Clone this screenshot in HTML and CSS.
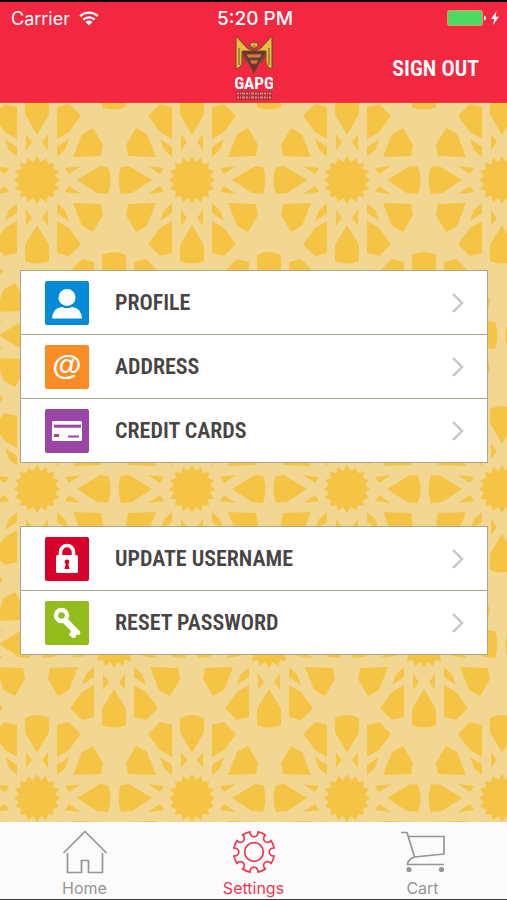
FILE: index.html
```html
<!DOCTYPE html>
<html lang="en">
<head>
<meta charset="utf-8">
<meta name="viewport" content="width=device-width, initial-scale=1">
<title>Settings</title>
<link rel="stylesheet" href="styles.css">
</head>
<body>
<div class="screen">
  <header class="header">
    <div class="status">
      <div class="status-left">
        <span>Carrier</span>
        <svg class="wifi" viewBox="0 0 20 15" aria-hidden="true">
          <g fill="none" stroke="#fff" stroke-width="2.4">
            <path d="M1.2 5.2a12.6 12.6 0 0 1 17.6 0"/>
            <path d="M4.4 8.7a8 8 0 0 1 11.2 0"/>
          </g>
          <path d="M10 14.5 6.6 11a4.8 4.8 0 0 1 6.800 0z" fill="#fff"/>
        </svg>
      </div>
      <span class="time">5:20 PM</span>
      <div class="status-right">
        <svg class="battery" viewBox="0 0 52 16" aria-hidden="true">
          <rect x="0.5" y="0.5" width="35" height="15" rx="2" fill="#4cd964" stroke="#e0995f"/>
          <path d="M37 5.5q2 .5 2 2.500t-2 2.500z" fill="#fff"/>
          <path d="M49.500 1 44 9h3.200L46 15l6-8.300h-3.400z" fill="#fff"/>
        </svg>
      </div>
    </div>
    <div class="bar">
      <svg class="logo" viewBox="0 0 38 66" role="img" aria-label="GAPG logo">
        <g stroke="#6b4a32" stroke-width="1" stroke-linejoin="round">
          <path d="M1 1 12 13q7 5 14 0L37 1v33q-5-1-6-6V17H7v11q-1 5-6 6z" fill="#e8bd3f"/>
          <path d="M4 13v17M34 13v17M7 16l4 12M31 16l-4 12" fill="none"/>
          <path d="M7 16h24L19 38z" fill="#67352a"/>
          <path d="M11 19h16l-2 4H13zM14.500 25h9l-2 4h-5z" fill="#df793e"/>
          <path d="M15 12q-1-5 4-5t4 5q-4 3-8 0z" fill="#c98e35"/>
        </g>
        <circle cx="17.500" cy="9.500" r="1" fill="#f7df75"/>
        <circle cx="21" cy="9.500" r="1" fill="#f7df75"/>
        <text class="logo-text" x="19" y="54" text-anchor="middle">GAPG</text>
        <rect x="1" y="56" width="36" height="9" fill="#b82d3a"/>
        <path d="M2 58.500h34M2 62.500h34" stroke="#d38d83" stroke-width="2" stroke-dasharray="2 1 1 1 3 1"/>
      </svg>
      <button class="sign-out" type="button">SIGN OUT</button>
    </div>
  </header>

  <main class="content">
    <svg class="backdrop" aria-hidden="true">
      <defs>
        <g id="quarter">
          <path d="M36 23 64 24 66 35 56 52 45 46z"/>
          <path d="M20 41 32 48 44 64 32 76 20 73z"/>
          <path d="M28 12 44 14 32 6z"/>
          <path d="M20 23 28 30 32 41 20 33z"/>
          <path d="M11 30 11 46 5 38z"/>
        </g>
        <g id="rosette">
          <use href="#quarter"/>
          <use href="#quarter" transform="scale(-1 1)"/>
          <use href="#quarter" transform="scale(1 -1)"/>
          <use href="#quarter" transform="scale(-1 -1)"/>
          <path d="M40 0 63-14 71-13Q76 0 71 14L60 13z"/>
          <path d="M-40 0-63-14-71-13Q-76 0-71 14L-60 13z"/>
          <path d="M0 45 12 65 12 81Q0 86-12 81L-12 65z"/>
          <path d="M0-45 12-66 12-80Q0-86-12-80L-12-66z"/>
          <path d="M0-24 4-18 9-22 11-16 17-17 16-11 22-9 18-4 23 0 18 4 22 9 16 11 17 17 11 16 9 22 4 18 0 24-4 18-9 22-11 16-17 17-16 11-22 9-18 4-23 0-18-4-22-9-16-11-17-17-11-16-9-22-4-18z"/>
        </g>
        <pattern id="tiles" width="155" height="309" patternUnits="userSpaceOnUse">
          <rect width="155" height="309" fill="#f2d792"/>
          <g fill="#f5c445">
            <use href="#rosette" x="37" y="77"/>
            <use href="#rosette" x="192" y="77"/>
            <use href="#rosette" x="37" y="386"/>
            <use href="#rosette" x="192" y="386"/>
            <use href="#rosette" x="114" y="232"/>
            <use href="#rosette" x="-41" y="232"/>
            <use href="#rosette" x="114" y="-77"/>
            <use href="#rosette" x="-41" y="-77"/>
          </g>
        </pattern>
      </defs>
      <rect width="100%" height="100%" fill="url(#tiles)"/>
    </svg>

    <nav class="card" aria-label="Account">
      <a class="row" href="#profile">
        <svg class="icon" viewBox="0 0 44 44" aria-hidden="true">
          <rect width="44" height="44" rx="2" fill="#058bd8"/>
          <circle cx="22" cy="16.500" r="8.500" fill="#fff"/>
          <path d="M7 37.500Q8 26.500 17 26q5 2.500 10 0Q36 26.500 37 37.500z" fill="#fff"/>
        </svg>
        <span class="label">PROFILE</span>
        <svg class="chevron" viewBox="0 0 12 20" aria-hidden="true"><path d="M1 1l9 9-9 9"/></svg>
      </a>
      <a class="row" href="#address">
        <svg class="icon" viewBox="0 0 44 44" aria-hidden="true">
          <rect width="44" height="44" rx="2" fill="#fb8b24"/>
          <text class="at" x="22" y="30" text-anchor="middle">@</text>
        </svg>
        <span class="label">ADDRESS</span>
        <svg class="chevron" viewBox="0 0 12 20" aria-hidden="true"><path d="M1 1l9 9-9 9"/></svg>
      </a>
      <a class="row" href="#cards">
        <svg class="icon" viewBox="0 0 44 44" aria-hidden="true">
          <rect width="44" height="44" rx="2" fill="#9b45a5"/>
          <rect x="7" y="12" width="30" height="20" rx="1.500" fill="#fff"/>
          <path d="M9 17.200h27" stroke="#9b45a5" stroke-width="3"/>
          <path d="M9 26.500h5" stroke="#9b45a5" stroke-width="3"/>
          <path d="M23 27.500h11" stroke="#9b45a5" stroke-width="2"/>
        </svg>
        <span class="label">CREDIT CARDS</span>
        <svg class="chevron" viewBox="0 0 12 20" aria-hidden="true"><path d="M1 1l9 9-9 9"/></svg>
      </a>
    </nav>

    <nav class="card" aria-label="Security">
      <a class="row" href="#username">
        <svg class="icon" viewBox="0 0 44 44" aria-hidden="true">
          <rect width="44" height="44" rx="2" fill="#d6002b"/>
          <path d="M15.500 19v-4a6.500 6.500 0 0 1 13 0v4" fill="none" stroke="#fff" stroke-width="3.600"/>
          <rect x="11" y="18" width="22" height="18" rx="1.500" fill="#fff"/>
          <circle cx="22" cy="25" r="2.400" fill="#d6002b"/>
          <path d="M21 26h2l1.500 6h-5z" fill="#d6002b"/>
        </svg>
        <span class="label">UPDATE USERNAME</span>
        <svg class="chevron" viewBox="0 0 12 20" aria-hidden="true"><path d="M1 1l9 9-9 9"/></svg>
      </a>
      <a class="row" href="#password">
        <svg class="icon" viewBox="0 0 44 44" aria-hidden="true">
          <rect width="44" height="44" rx="2" fill="#93bd1b"/>
          <circle cx="16.500" cy="14.500" r="5.500" fill="none" stroke="#fff" stroke-width="4.400"/>
          <path d="M22.500 17.500 35.500 31l-1 3-3-.5-1 3-2.500.5-4-3 2-4-8-8z" fill="#fff"/>
        </svg>
        <span class="label">RESET PASSWORD</span>
        <svg class="chevron" viewBox="0 0 12 20" aria-hidden="true"><path d="M1 1l9 9-9 9"/></svg>
      </a>
    </nav>
  </main>

  <nav class="tabs" aria-label="Main">
    <a class="tab" href="#home">
      <svg class="tab-icon" viewBox="0 0 46 44" aria-hidden="true">
        <path d="M1.500 23 23 1.500 44.500 23M5.500 23v19.500h14v-12h7v12h14V23"/>
      </svg>
      <span>Home</span>
    </a>
    <a class="tab active" href="#settings" aria-current="page">
      <svg class="tab-icon" viewBox="0 0 46 44" aria-hidden="true">
        <path d="M19.100 1.900A4 4 0 1 0 26.900 1.900A20.500 20.500 0 0 1 34.500 5A4 4 0 1 0 40 10.500A20.500 20.500 0 0 1 43.100 18.100A4 4 0 1 0 43.100 25.900A20.500 20.500 0 0 1 40 33.500A4 4 0 1 0 34.500 39A20.500 20.500 0 0 1 26.900 42.100A4 4 0 1 0 19.100 42.100A20.500 20.500 0 0 1 11.500 39A4 4 0 1 0 6 33.500A20.500 20.500 0 0 1 2.900 25.900A4 4 0 1 0 2.900 18.100A20.500 20.500 0 0 1 6 10.500A4 4 0 1 0 11.500 5A20.500 20.500 0 0 1 19.100 1.900z"/>
        <circle cx="23" cy="22" r="9.300"/>
      </svg>
      <span>Settings</span>
    </a>
    <a class="tab" href="#cart">
      <svg class="tab-icon" viewBox="0 0 46 44" aria-hidden="true">
        <path d="M1 2.500h6L14.500 27M8 6.500h36V24l-29.500 3c-4 1.500-7 4-7 7.500H44"/>
        <circle class="wheel" cx="9" cy="39.500" r="2.600"/>
        <circle class="wheel" cx="41.500" cy="39.500" r="2.600"/>
      </svg>
      <span>Cart</span>
    </a>
  </nav>
</div>
</body>
</html>
```
FILE: styles.css
```css
* {
  box-sizing: border-box;
}

body {
  margin: 0;
  font-family: Inter, "Liberation Sans", sans-serif;
}

a {
  color: inherit;
  text-decoration: none;
}

.screen {
  display: flex;
  flex-direction: column;
  min-height: 100vh;
  border-top: 2px solid #0c0002;
  border-bottom: 1px solid #3c3c3e;
}

.header {
  background: #f3273f;
  color: #fff;
  border-bottom: 1px solid #e3423f;
}

.status {
  display: grid;
  grid-template-columns: 1fr auto 1fr;
  align-items: center;
  height: 32px;
  padding: 0 8px 0 11px;
  font-size: 18px;
}

.status-left {
  display: flex;
  align-items: center;
  gap: 9px;
}

.status-right {
  display: flex;
  justify-content: flex-end;
}

.wifi {
  width: 20px;
  height: 15px;
}

.battery {
  width: 52px;
  height: 16px;
}

.time {
  font-size: 19px;
  font-weight: 500;
}

.bar {
  display: grid;
  grid-template-columns: 1fr auto 1fr;
  align-items: center;
  height: 68px;
  padding: 0 28px;
}

.logo {
  grid-column: 2;
  width: 38px;
  height: 66px;
}

.logo-text {
  fill: #fff;
  font: bold 17px "Roboto Condensed", "Liberation Sans Narrow", Roboto, sans-serif;
}

.at {
  fill: #fff;
  font: bold 30px "Liberation Sans", sans-serif;
}

.sign-out {
  justify-self: end;
  padding: 0;
  border: 0;
  background: none;
  color: #fff;
  font: 600 22px "Roboto Condensed", "Liberation Sans Narrow", Roboto, sans-serif;
}

.content {
  position: relative;
  flex: 1;
  display: flex;
  flex-direction: column;
  gap: 63px;
  padding: 167px 19px 40px 20px;
}

.backdrop {
  position: absolute;
  inset: 0;
  width: 100%;
  height: 100%;
}

.card {
  position: relative;
  background: #fff;
  border: 1px solid #aaa78c;
}

.row {
  display: flex;
  align-items: center;
  height: 63px;
  padding: 0 23px 0 24px;
}

.row + .row {
  height: 64px;
  border-top: 1px solid #aaa78c;
}

.icon {
  flex: none;
  width: 44px;
  height: 44px;
}

.label {
  flex: 1;
  margin-left: 26px;
  color: #484444;
  font: 600 22px "Roboto Condensed", "Liberation Sans Narrow", Roboto, sans-serif;
}

.chevron {
  width: 12px;
  height: 20px;
  fill: none;
  stroke: #c5c5c7;
  stroke-width: 2.4;
}

.tabs {
  display: grid;
  grid-template-columns: repeat(3, 1fr);
  height: 77px;
  background: #fbfbfb;
}

.tab {
  display: flex;
  flex-direction: column;
  align-items: center;
  gap: 4px;
  padding-top: 8px;
  color: #959595;
  font-size: 16px;
  line-height: 20px;
}

.active {
  color: #ec3850;
}

.tab-icon {
  width: 46px;
  height: 44px;
  fill: none;
  stroke: currentColor;
  stroke-width: 1.7;
  stroke-linejoin: round;
}

.wheel {
  fill: currentColor;
  stroke: none;
}
```
